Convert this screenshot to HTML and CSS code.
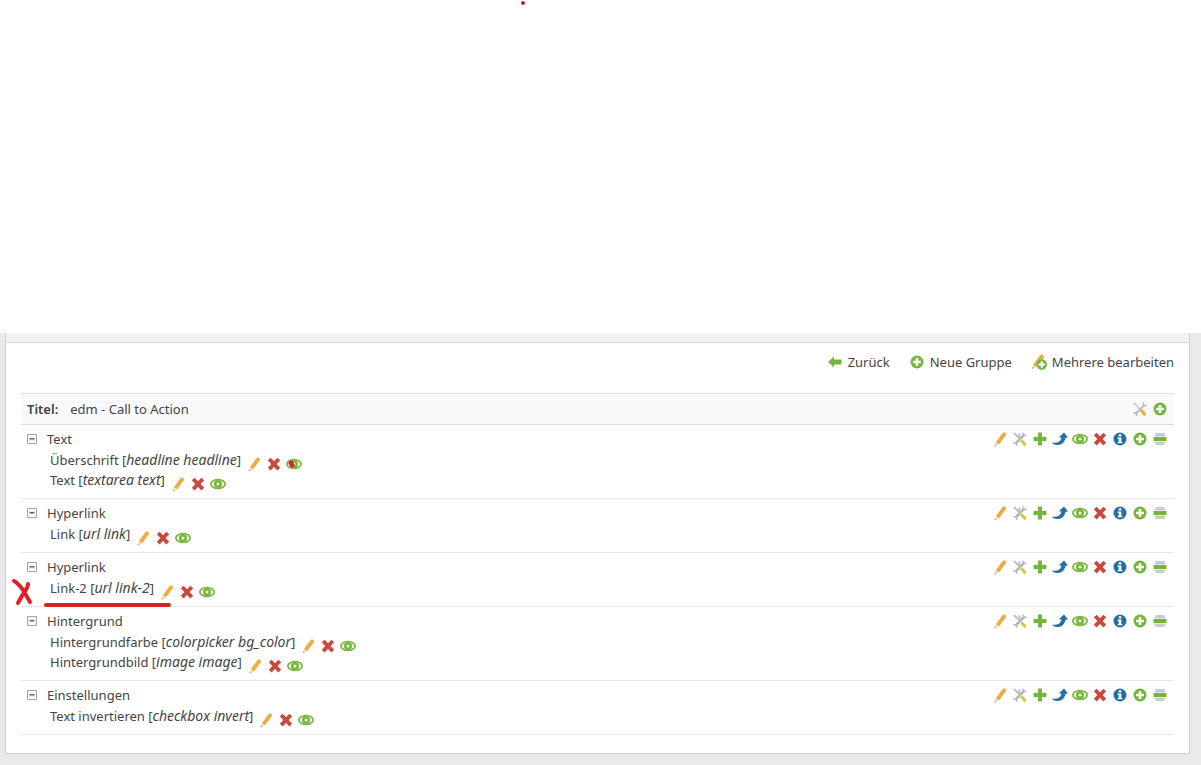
FILE: index.html
```
<!DOCTYPE html>
<html lang="de">

<head>
  <meta charset="UTF-8">
  <title>edm - Call to Action</title>
  <link rel="stylesheet" href="styles.css">
</head>

<body>
  <svg class="sprite" aria-hidden="true">
    <symbol id="edit" viewBox="0 0 16 16">
      <path fill="#eaad42" d="M10.4 2.2 12 1.2l2 1.2-.2 1.8L7 13.4l-3.2-2.2z"/>
      <path fill="#f7e3bd" d="m3.8 11.2 3.2 2.2-3.6 1.8z"/>
      <path fill="#d99a3a" d="m3.3 13.2 1.4 1-2.5 1.4z"/>
    </symbol>
    <symbol id="tools" viewBox="0 0 16 16">
      <path stroke="#b9babd" stroke-width="1.8" d="M12.6 3.6 3.4 13"/>
      <path stroke="#c4c5c8" stroke-width="1.5" d="m2 2 7 7"/>
      <path fill="none" stroke="#b9babd" stroke-width="1.5" d="M11.4 1.6v3h3.2M1.4 11.8h3.2V15"/>
      <path stroke="#eaad32" stroke-width="3" stroke-linecap="round" d="m9.6 9.8 3 3.4"/>
    </symbol>
    <symbol id="tools-group" viewBox="0 0 16 16">
      <path stroke="#b0b1b4" stroke-width="2.4" d="M12.6 3.4 3.4 12.6"/>
      <path stroke="#c0c1c4" stroke-width="2" d="m2 2 7 7M7.5 2.5v5"/>
      <path fill="none" stroke="#b9babd" stroke-width="1.5" d="M11.4 1.6v3h3.2M1.4 11.8h3.2V15"/>
      <path stroke="#e6c02e" stroke-width="3" stroke-linecap="round" d="m10 10.3 2.8 2.8"/>
    </symbol>
    <symbol id="paste" viewBox="0 0 16 16">
      <path fill="#73b63a" d="M6 1.5h4V6h4.500v4H10v4.500H6V10H1.500V6H6z"/>
    </symbol>
    <symbol id="move" viewBox="0 0 16 16">
      <path fill="#236f9f" d="M6.800 6.200 12 1.500l4 5-2.600.2C13 11.500 9 14.300 5 14 2.800 13.900 1 13.200.2 11.700c4.300.5 8.500-.7 9.300-5.300z"/>
    </symbol>
    <symbol id="show" viewBox="0 0 16 16">
      <ellipse cx="8" cy="8" rx="8" ry="5.2" fill="#79b63e"/>
      <ellipse cx="8" cy="8" rx="6.3" ry="3.7" fill="#f4faed"/>
      <circle cx="8" cy="8" r="4" fill="#79b63e"/>
      <circle cx="8" cy="8" r="1.5" fill="#eef7e3"/>
    </symbol>
    <symbol id="delete" viewBox="0 0 16 16">
      <path stroke="#c94a3f" stroke-width="4" d="m3.2 3 9.6 10.2M12.8 3 3.2 13.2"/>
    </symbol>
    <symbol id="info" viewBox="0 0 16 16">
      <circle cx="8" cy="8" r="6.5" fill="#236f9f"/>
      <path fill="#fff" d="M6.7 3.2h2.6v2.3H6.7zM5.7 6.6h3.6v4.3h1v1.3H5.7v-1.3h1V7.9h-1z"/>
    </symbol>
    <symbol id="new" viewBox="0 0 16 16">
      <circle cx="8" cy="8" r="6.5" fill="#73b63a"/>
      <path fill="#fff" d="M6.7 4h2.6v2.7H12v2.6H9.3V12H6.7V9.3H4V6.7h2.7z"/>
    </symbol>
    <symbol id="drag" viewBox="0 0 16 16">
      <path fill="#cacbcd" d="M4 2h8l2 3.500H2zM2 10.500h12L12 14H4z"/>
      <path fill="#79b63e" d="M1.5 6h13v4h-13z"/>
    </symbol>
    <symbol id="back" viewBox="0 0 16 16">
      <path fill="#73b63a" d="m1 8 6-5.500v3h7.500v5H7v3z"/>
    </symbol>
    <symbol id="multi" viewBox="0 0 16 16">
      <path fill="#eaad42" d="M9 1.2 10.8.3l2 1.300v2.600L5 13l-3.200-1.800z"/>
      <path fill="#e5bd78" d="m1.500 12 2.700 1.500L.7 15.500z"/>
      <circle cx="10.7" cy="10.5" r="5.2" fill="#73b63a"/>
      <path fill="#fff" d="M9.7 7.200h2.100v2.200H14v2.100h-2.200v2.200H9.700v-2.200H7.500V9.400h2.200z"/>
    </symbol>
    <symbol id="fold" viewBox="0 0 10 10">
      <path fill="#fafafd" stroke="#a3a3b8" d="M.5.5h9v9h-9z"/>
      <path fill="#62627c" d="M2.5 4h5v1.500h-5z"/>
    </symbol>
  </svg>

  <main class="shell">
    <div class="panel">
      <div class="panel-top"></div>
      <div class="panel-body">
        <nav class="global">
          <a href="#"><svg class="icon"><use href="#back"/></svg>Zurück</a>
          <a href="#"><svg class="icon"><use href="#new"/></svg>Neue Gruppe</a>
          <a href="#"><svg class="icon"><use href="#multi"/></svg>Mehrere bearbeiten</a>
        </nav>
        <div class="listing">
          <div class="header">
            <span><strong>Titel:</strong>edm - Call to Action</span>
            <div class="icons" id="headerIcons"></div>
          </div>
          <div id="groups"></div>
        </div>
      </div>
    </div>
  </main>

  <!-- red pen marks -->
  <svg class="marks" aria-hidden="true">
    <circle cx="523" cy="3" r="2"/>
    <path class="blob" d="m291 463 1 2"/>
    <path class="pen" d="M14 581c4 2 6 5 9 9l7 12M28 584c0 4-3 7-5 10l-5 9"/>
    <path class="line" d="M46 605h123"/>
  </svg>

  <script>
    const groups = [
      { title: 'Text', fields: [['Überschrift', 'headline headline'], ['Text', 'textarea text']] },
      { title: 'Hyperlink', fields: [['Link', 'url link']] },
      { title: 'Hyperlink', fields: [['Link-2', 'url link-2']] },
      { title: 'Hintergrund', fields: [['Hintergrundfarbe', 'colorpicker bg_color'], ['Hintergrundbild', 'image image']] },
      { title: 'Einstellungen', fields: [['Text invertieren', 'checkbox invert']] }
    ];
    const labels = {
      edit: 'Bearbeiten', tools: 'Einstellungen', 'tools-group': 'Einstellungen', paste: 'Einfügen', move: 'Verschieben',
      show: 'Anzeigen', delete: 'Löschen', info: 'Details', new: 'Neu', drag: 'Sortieren'
    };

    function icons(names) {
      return names.map(n => `<a href="#" aria-label="${labels[n]}"><svg class="icon"><use href="#${n}"/></svg></a>`).join('');
    }

    function field([name, type]) {
      return `<li><span>${name} [<em>${type}</em>]</span><div class="icons">${icons(['edit', 'delete', 'show'])}</div></li>`;
    }

    document.getElementById('headerIcons').innerHTML = icons(['tools', 'new']);
    document.getElementById('groups').innerHTML = groups.map(g => `
      <section class="group">
        <div class="group-main">
          <div class="group-title">
            <button class="toggle" aria-label="Zuklappen"><svg><use href="#fold"/></svg></button>
            <span>${g.title}</span>
          </div>
          <ul class="fields">${g.fields.map(field).join('')}</ul>
        </div>
        <div class="icons">${icons(['edit', 'tools-group', 'paste', 'move', 'show', 'delete', 'info', 'new', 'drag'])}</div>
      </section>`).join('');
  </script>
</body>
</html>
```
FILE: styles.css
```
* {
  box-sizing: border-box;
}
body {
  margin: 0;
  position: relative;
  background: #fff;
  color: #444;
  font-family: "Noto Sans", "Open Sans", sans-serif;
  font-size: 13px;
  line-height: 20px;
}
a {
  color: inherit;
  text-decoration: none;
}
svg {
  display: block;
}
.sprite {
  display: none;
}
.shell {
  margin-top: 333px;
  padding: 0 11px 11px 5px;
  background: #eaeaec;
}
.panel {
  background: #fff;
  border: 1px solid #d0d0d3;
  border-top: none;
}
.panel-top {
  height: 10px;
  background: #f2f2f4;
  border-bottom: 1px solid #d8d8db;
}
.panel-body {
  padding: 9px 15px 18px;
}
.global {
  display: flex;
  justify-content: flex-end;
  gap: 19px;
  margin-bottom: 21px;
}
.global a {
  display: flex;
  align-items: center;
  gap: 5px;
}
.icon {
  width: 16px;
  height: 16px;
}
.icons {
  display: flex;
  gap: 4px;
}
.header {
  display: flex;
  justify-content: space-between;
  align-items: center;
  padding: 5px 6px;
  background: #f9f9fb;
  border-top: 1px solid #dedee1;
  border-bottom: 1px solid #dedee1;
}
.header strong {
  margin-right: 12px;
  font-weight: 600;
}
.group {
  display: flex;
  justify-content: space-between;
  padding: 4px 6px 8px;
  border-bottom: 1px solid #e7e7e9;
}
.group > .icons {
  padding-top: 2px;
}
.group-title {
  display: flex;
  align-items: center;
  gap: 10px;
}
.toggle {
  padding: 0;
  border: none;
  background: none;
  cursor: pointer;
}
.toggle svg {
  width: 10px;
  height: 10px;
}
.fields {
  margin: 1px 0 0;
  padding: 0 0 0 23px;
  list-style: none;
}
.fields li {
  display: flex;
  gap: 5px;
  height: 20px;
}
.fields em {
  font-size: 14px;
}
.fields .icons {
  padding-top: 6px;
}
.marks {
  position: absolute;
  top: 0;
  left: 0;
  width: 100%;
  height: 100%;
  pointer-events: none;
  fill: none;
  stroke: #dd2025;
  stroke-linecap: round;
  stroke-linejoin: round;
}
.marks circle {
  fill: #c9202c;
  stroke: none;
}
.marks .blob {
  stroke-width: 5;
}
.marks .pen, .marks .line {
  stroke-width: 4;
}
```
